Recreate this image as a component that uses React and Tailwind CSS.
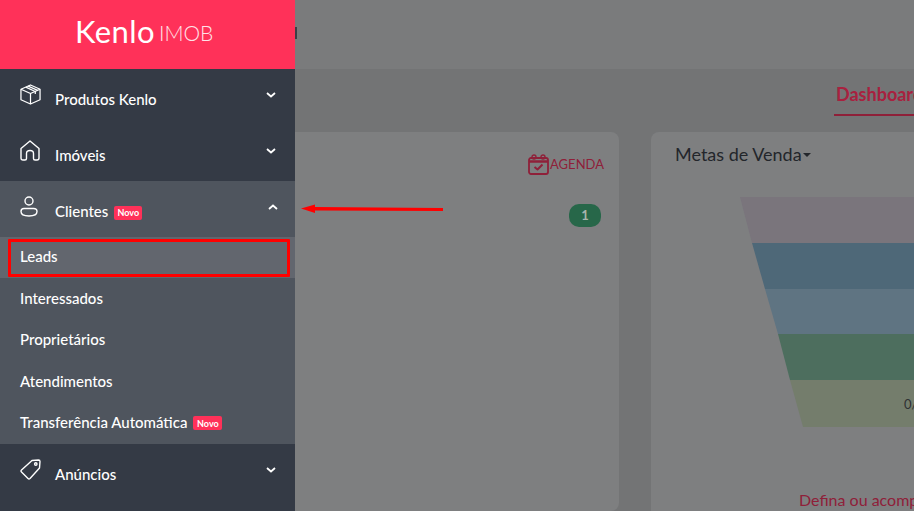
import React from 'react';

const menuText = 'text-[15px] font-medium text-white';

function BoxIcon() {
  return (
    <svg width="21" height="21" viewBox="0 0 22 22" fill="none" stroke="#fff" strokeWidth="1.3" strokeLinejoin="round">
      <path d="M11 1 L21 5.5 V16.5 L11 21 L1 16.5 V5.5 Z" />
      <path d="M1 5.5 L11 10 L21 5.5 M11 10 V21" />
      <path d="M6 3.3 L16 7.8 V10.5 M8.5 2.2 L18.5 6.7" />
    </svg>
  );
}

function HouseIcon() {
  return (
    <svg width="20" height="21" viewBox="0 0 20 21" fill="none" stroke="#fff" strokeWidth="1.4" strokeLinejoin="round" strokeLinecap="round">
      <path d="M1 8.5 L10 1 L19 8.5 V18 Q19 20 17 20 H15 Q13.5 20 13.5 18.5 V13.5 Q13.5 10.5 10 10.5 Q6.5 10.5 6.5 13.5 V18.5 Q6.5 20 5 20 H3 Q1 20 1 18 Z" />
    </svg>
  );
}

function PersonIcon() {
  return (
    <svg width="18" height="21" viewBox="0 0 18 21" fill="none" stroke="#fff" strokeWidth="1.4">
      <circle cx="9" cy="5" r="4" />
      <path d="M4 12.5 H13.5 Q17 12.5 17 15.5 Q17 20 9 20 Q1 20 1 15.5 Q1 12.5 4 12.5 Z" />
    </svg>
  );
}

function TagIcon() {
  return (
    <svg width="21" height="21" viewBox="0 0 21 21" fill="none" stroke="#fff" strokeWidth="1.4" strokeLinejoin="round">
      <path d="M12 1.5 L18.5 1 Q20 1 20 2.5 L19.5 9 L10 19.5 Q9 20.5 8 19.5 L1.5 13 Q0.5 12 1.5 11 Z" />
      <circle cx="15.8" cy="5" r="1.2" />
    </svg>
  );
}

function Chevron({ up }) {
  return (
    <svg width="10" height="6" viewBox="0 0 10 6" fill="none" stroke="#fff" strokeWidth="1.8">
      <path d={up ? 'M1 5 L5 1.5 L9 5' : 'M1 1 L5 4.5 L9 1'} />
    </svg>
  );
}

function Novo({ wide }) {
  return (
    <span className={`inline-flex h-[14px] items-center justify-center rounded-[2px] bg-[#ff3159] text-[9px] font-bold text-white ${wide ? 'w-[29px]' : 'w-[28px]'}`}>
      Novo
    </span>
  );
}

function MenuItem({ icon, label, badge, up, className }) {
  return (
    <div className={`flex h-[56px] ${className}`}>
      <div className="ml-[20px] mt-[15px] flex w-[35px] items-start">{icon}</div>
      <div className="mt-[20px] flex h-[20px] items-center">
        <span className={menuText}>{label}</span>
        {badge && <span className="ml-[6px] mt-[3px] flex"><Novo /></span>}
      </div>
      <div className={`ml-auto mt-[23px] ${up ? 'mr-[17px]' : 'mr-[19px]'}`}><Chevron up={up} /></div>
    </div>
  );
}

function SubItem({ label, badge, active }) {
  return (
    <div className={`flex h-[41.4px] items-center pb-[2px] pl-[20px] ${active ? 'bg-[#62666e]' : ''}`}>
      <span className={menuText}>{label}</span>
      {badge && <span className="ml-[6px] mt-[2px] flex"><Novo wide /></span>}
    </div>
  );
}

function Sidebar() {
  return (
    <aside className="z-10 flex w-[295px] shrink-0 flex-col bg-[#343a45]">
      <div className="flex h-[69px] items-center bg-[#ff3159] pb-[7px] pl-[75px] text-white">
        <span className="text-[31px] font-normal leading-none tracking-[0.4px]">Kenlo</span>
        <span className="ml-[4px] mt-[3px] text-[21px] font-light leading-none tracking-[0px] text-[#ffe3e8]">IMOB</span>
      </div>
      <MenuItem icon={<BoxIcon />} label="Produtos Kenlo" />
      <MenuItem icon={<HouseIcon />} label="Imóveis" />
      <div className="bg-[#4f555e]">
        <MenuItem icon={<PersonIcon />} label="Clientes" badge up />
        <SubItem label="Leads" active />
        <SubItem label="Interessados" />
        <SubItem label="Proprietários" />
        <SubItem label="Atendimentos" />
        <SubItem label="Transferência Automática" badge />
      </div>
      <MenuItem icon={<TagIcon />} label="Anúncios" />
    </aside>
  );
}

function CalendarIcon() {
  return (
    <svg width="21" height="21" viewBox="0 0 21 21" fill="none" stroke="#8f2039" strokeWidth="1.8" strokeLinejoin="round">
      <rect x="1" y="4" width="19" height="16" rx="2" />
      <path d="M1 7.5 H20" strokeWidth="2.5" />
      <circle cx="6" cy="3" r="2" strokeWidth="1.4" />
      <circle cx="15" cy="3" r="2" strokeWidth="1.4" />
      <path d="M6.5 13 L9.5 15.5 L14.5 10.5" strokeWidth="2" />
    </svg>
  );
}

function Funnel() {
  return (
    <svg width="174" height="230" viewBox="0 0 174 230" className="block">
      <polygon points="0,0 174,0 174,46 12,46" fill="#7a757c" />
      <polygon points="12,46 174,46 174,92 25,92" fill="#4e6878" />
      <polygon points="25,92 174,92 174,137 38,137" fill="#5f7482" />
      <polygon points="38,137 174,137 174,183 50,183" fill="#4d6e5e" />
      <polygon points="50,183 174,183 174,230 63,230" fill="#747d6c" />
      <text x="164" y="212" fontSize="13" fill="#2e3133" fontFamily="Lato">0/</text>
    </svg>
  );
}

function Main() {
  return (
    <main className="flex min-w-0 flex-1 flex-col bg-[#737475]">
      <header className="flex h-[69px] shrink-0 items-start bg-[#7a7b7c] pt-[27px]">
        <div className="h-[12px] w-[2px] bg-[#3b3f46]" />
      </header>
      <nav className="flex h-[63px] shrink-0 overflow-hidden">
        <div className="ml-[539px] mt-[14px] h-[33px] min-w-0 flex-1 whitespace-nowrap border-b-2 border-[#8f2039] pl-[2px] text-[18px] font-bold leading-[22px] text-[#a8213f]">
          Dashboard
        </div>
      </nav>
      <div className="flex flex-1 gap-[32px] overflow-hidden">
        <section className="flex w-[324px] shrink-0 flex-col rounded-r-lg bg-[#7e7f80] pr-[15px]">
          <div className="mt-[22px] flex items-center justify-end gap-[1px]">
            <CalendarIcon />
            <span className="text-[13px] text-[#8f2039]">AGENDA</span>
          </div>
          <div className="mr-[3px] mt-[29px] flex justify-end">
            <span className="flex h-[23px] w-[32px] items-center justify-center rounded-[10px] bg-[#276749] text-[13px] font-bold text-[#a9b5ae]">1</span>
          </div>
        </section>
        <section className="min-w-0 flex-1 rounded-tl-lg bg-[#7e7f80]">
          <div className="mt-[11px] flex items-center pl-[24px] text-[18px] leading-[22px] text-[#23262b]">
            Metas de Venda
            <span className="ml-[1px] mt-[2px] h-0 w-0 border-x-[4px] border-t-[4px] border-x-transparent border-t-[#23262b]" />
          </div>
          <div className="ml-[89px] mt-[32px]"><Funnel /></div>
          <div className="ml-[148px] mt-[61px] whitespace-nowrap text-[16px] text-[#8f2039]">Defina ou acompanhe</div>
        </section>
      </div>
    </main>
  );
}

export default function App() {
  return (
    <div className="relative flex h-[511px] w-[914px] overflow-hidden font-['Lato',sans-serif]">
      <Sidebar />
      <Main />
      {/* Marcações vermelhas por cima da tela */}
      <div className="absolute left-[8px] top-[239px] z-20 h-[38px] w-[282px] rounded-[1px] border-[3px] border-[#ff0000]" />
      <svg className="absolute left-[300px] top-[203px] z-20" width="144" height="12" viewBox="0 0 144 12">
        <path d="M1 5.5 L15 1.5 V4 L143 5 V8 L15 7.5 V10 Z" fill="#ff0000" />
      </svg>
    </div>
  );
}
